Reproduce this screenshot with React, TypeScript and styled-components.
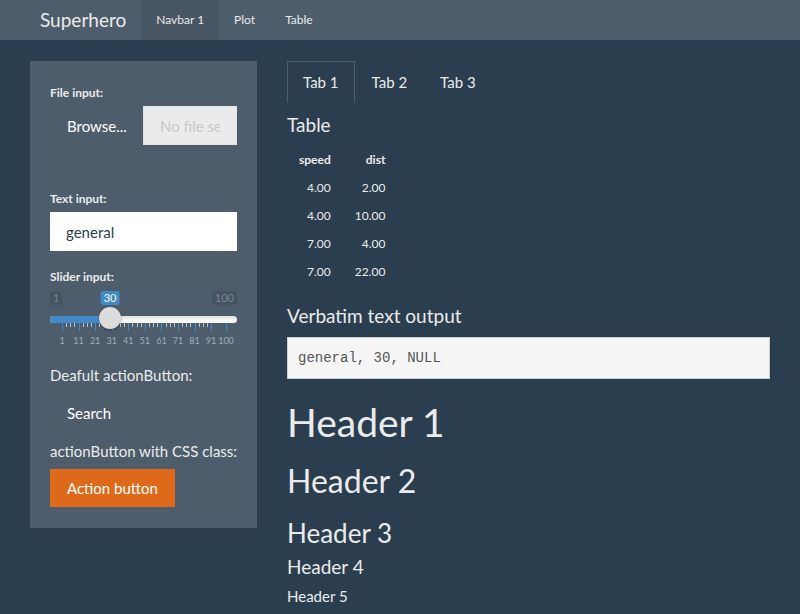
import React from 'react';
import styled, {createGlobalStyle} from 'styled-components';

const GlobalStyle = createGlobalStyle`
    * { box-sizing: border-box; }
    html, body {
        margin: 0;
        padding: 0;
        background: #2b3e50;
    }
    body {
        font-family: Lato, "Open Sans", sans-serif;
        font-size: 15px;
        line-height: 1.42857;
        color: #ebebeb;
    }
`;

const Navbar = styled.nav`
    display: flex;
    height: 40px;
    padding-left: 25px;
    background: #4e5d6c;
`;

const Brand = styled.a`
    padding: 0 15px;
    font-size: 19px;
    line-height: 40px;
    color: #ebebeb;
`;

const NavLink = styled.a<{ $active?: boolean }>`
    padding: 0 15px;
    font-size: 12px;
    line-height: 40px;
    color: #ebebeb;
    background: ${p => (p.$active ? '#485563' : 'transparent')};
`;

const Page = styled.div`
    display: flex;
    align-items: flex-start;
    gap: 30px;
    padding: 21px 30px 0;
`;

const Well = styled.aside`
    flex: none;
    width: 227px;
    padding: 24px 20px 21px;
    background: #4e5d6c;
`;

const FieldLabel = styled.label`
    display: block;
    margin-bottom: 5px;
    font-size: 12px;
    font-weight: 700;
    line-height: 16px;
`;

const FileRow = styled.div`
    display: flex;
    height: 39px;
    margin-bottom: 46px;
`;

const Button = styled.button<{ $variant?: 'default' | 'primary' }>`
    display: block;
    height: ${p => (p.$variant === 'primary' ? '38px' : '39px')};
    padding: 0 16px;
    border: 1px solid transparent;
    border-radius: 0;
    font-family: inherit;
    font-size: 15px;
    color: #fff;
    background: ${p => (p.$variant === 'primary' ? '#df691a' : '#4e5d6c')};
    cursor: pointer;
`;

const BrowseButton = styled(Button)`
    width: 93px;
    text-align: left;
`;

const FileName = styled.input`
    flex: 1;
    min-width: 0;
    height: 39px;
    padding: 0 16px;
    border: 1px solid #e4e4e4;
    border-radius: 0;
    font-family: inherit;
    font-size: 15px;
    color: #c8c8c8;
    background: #ebebeb;
    outline: none;
`;

const TextInput = styled.input`
    display: block;
    width: 100%;
    height: 39px;
    margin-bottom: 18px;
    padding: 0 16px;
    border: 0;
    border-radius: 0;
    font-family: inherit;
    font-size: 15px;
    color: #2b3e50;
    background: #fff;
    outline: none;
`;

const Slider = styled.div`
    position: relative;
    height: 75px;
`;

const ValueTag = styled.span<{ $current?: boolean }>`
    position: absolute;
    top: 1px;
    height: 14px;
    padding: 0 3px;
    border-radius: 3px;
    font-size: 11px;
    line-height: 14px;
    color: ${p => (p.$current ? '#fff' : '#7c8792')};
    background: ${p => (p.$current ? '#428bca' : 'rgba(0, 0, 0, 0.1)')};
    transform: ${p => (p.$current ? 'translateX(-50%)' : 'none')};
`;

const Track = styled.div`
    position: absolute;
    top: 26px;
    left: 0;
    right: 0;
    height: 7px;
    border-radius: 4px;
    background: linear-gradient(#dedede, #f7f7f7 60%, #fff);
    overflow: hidden;
`;

const TrackFill = styled.div`
    height: 100%;
    background: #428bca;
`;

const Handle = styled.span`
    position: absolute;
    top: 17px;
    width: 22px;
    height: 22px;
    margin-left: -11px;
    border-radius: 50%;
    background: #dcdcdc;
    box-shadow: 0 1px 3px rgba(0, 0, 0, 0.35);
`;

const Tick = styled.span<{ $major?: boolean }>`
    position: absolute;
    top: 33px;
    width: 1px;
    height: ${p => (p.$major ? '8px' : '4px')};
    background: ${p => (p.$major ? '#428bca' : '#b9c0c7')};
`;

const TickLabel = styled.span`
    position: absolute;
    top: 45px;
    font-size: 9px;
    line-height: 12px;
    color: #a3acb5;
    transform: translateX(-50%);
`;

const Text = styled.p<{ $gap?: number }>`
    margin: ${p => p.$gap ?? 0}px 0 0;
    line-height: 21px;
    white-space: nowrap;
`;

const ButtonSlot = styled.div`
    margin-top: 7px;
`;

const Main = styled.main`
    flex: 1;
    min-width: 0;
`;

const Tabs = styled.ul`
    display: flex;
    margin: 0;
    padding: 0;
    list-style: none;
`;

const TabLink = styled.li<{ $active?: boolean }>`
    margin-right: 1px;
    padding: 10px 15px 9px;
    border: 1px solid ${p => (p.$active ? '#4e5d6c' : 'transparent')};
    border-bottom-color: transparent;
    line-height: 21px;
`;

const Heading = styled.h1<{ $size: number; $top: number; $bottom?: number }>`
    margin: ${p => p.$top}px 0 ${p => p.$bottom ?? 10.5}px;
    font-size: ${p => p.$size}px;
    font-weight: 400;
    line-height: 1.1;
`;

const Table = styled.table`
    margin-bottom: 20px;
    border-collapse: collapse;
    font-size: 12px;

    th, td {
        padding: 0 12px;
        text-align: right;
    }
    th {
        height: 28px;
        font-weight: 700;
    }
    td {
        height: 28px;
    }
`;

const Verbatim = styled.pre`
    margin: 0 0 10.5px;
    padding: 10px;
    border: 1px solid #ccc;
    font-family: "Liberation Mono", "Courier New", monospace;
    font-size: 14px;
    line-height: 20px;
    color: #555;
    background: #f5f5f5;
`;

const rows = [
    ['4.00', '2.00'],
    ['4.00', '10.00'],
    ['7.00', '4.00'],
    ['7.00', '22.00'],
];

const SLIDER_LEFT = 12;
const SLIDER_SPAN = 164;
const toX = (v: number) => SLIDER_LEFT + ((v - 1) / 99) * SLIDER_SPAN;
const majors = [1, 11, 21, 31, 41, 51, 61, 71, 81, 91, 100];

function SliderInput({value}: { value: number }) {
    const minors: number[] = [];
    majors.slice(0, -2).forEach(m => {
        [2.5, 5, 7.5].forEach(d => minors.push(m + d));
    });

    return (
        <Slider>
            <ValueTag style={{left: 0}}>1</ValueTag>
            <ValueTag $current style={{left: toX(value)}}>{value}</ValueTag>
            <ValueTag style={{right: 0}}>100</ValueTag>
            <Track>
                <TrackFill style={{width: toX(value)}}/>
            </Track>
            {majors.map(m => <Tick key={'M' + m} $major style={{left: toX(m)}}/>)}
            {minors.map(m => <Tick key={'m' + m} style={{left: toX(m)}}/>)}
            {majors.map(m => <TickLabel key={'L' + m} style={{left: toX(m)}}>{m}</TickLabel>)}
            <Handle style={{left: toX(value)}}/>
        </Slider>
    );
}

export default function App() {
    return (
        <>
            <GlobalStyle/>
            <Navbar>
                <Brand>Superhero</Brand>
                <NavLink $active>Navbar 1</NavLink>
                <NavLink>Plot</NavLink>
                <NavLink>Table</NavLink>
            </Navbar>
            <Page>
                <Well>
                    <FieldLabel>File input:</FieldLabel>
                    <FileRow>
                        <BrowseButton>Browse...</BrowseButton>
                        <FileName readOnly value="No file selected"/>
                    </FileRow>

                    <FieldLabel>Text input:</FieldLabel>
                    <TextInput defaultValue="general"/>

                    <FieldLabel>Slider input:</FieldLabel>
                    <SliderInput value={30}/>

                    <Text>Deafult actionButton:</Text>
                    <ButtonSlot><Button>Search</Button></ButtonSlot>
                    <Text $gap={9}>actionButton with CSS class:</Text>
                    <ButtonSlot><Button $variant="primary">Action button</Button></ButtonSlot>
                </Well>

                <Main>
                    <Tabs>
                        <TabLink $active>Tab 1</TabLink>
                        <TabLink>Tab 2</TabLink>
                        <TabLink>Tab 3</TabLink>
                    </Tabs>

                    <Heading as="h4" $size={19} $top={11.5}>Table</Heading>
                    <Table>
                        <thead>
                        <tr><th>speed</th><th>dist</th></tr>
                        </thead>
                        <tbody>
                        {rows.map((r, i) => (
                            <tr key={i}><td>{r[0]}</td><td>{r[1]}</td></tr>
                        ))}
                        </tbody>
                    </Table>

                    <Heading as="h4" $size={19} $top={10.5}>Verbatim text output</Heading>
                    <Verbatim>general, 30, NULL</Verbatim>

                    <Heading $size={39} $top={22}>Header 1</Heading>
                    <Heading as="h2" $size={32} $top={19}>Header 2</Heading>
                    <Heading as="h3" $size={26} $top={21} $bottom={9.5}>Header 3</Heading>
                    <Heading as="h4" $size={19} $top={8.5} $bottom={9.5}>Header 4</Heading>
                    <Heading as="h5" $size={15} $top={8.5}>Header 5</Heading>
                </Main>
            </Page>
        </>
    );
}
